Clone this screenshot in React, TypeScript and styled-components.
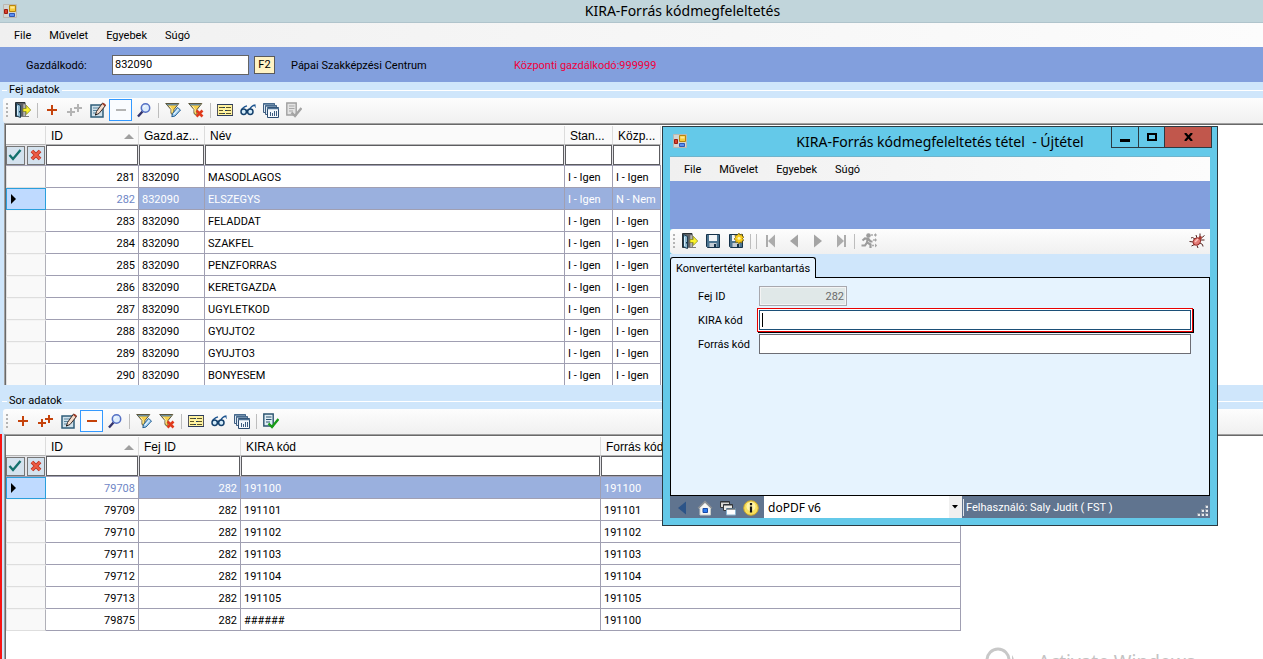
import React from "react";
import styled, { createGlobalStyle, css } from "styled-components";

const ui = `Roboto, "Liberation Sans", Arial, sans-serif`;
const wide = `"Liberation Sans", Arial, sans-serif`;
const segoe = `"Noto Sans", "Open Sans", sans-serif`;

const GlobalStyle = createGlobalStyle`
  *, *::before, *::after { box-sizing: border-box; }
  body { margin: 0; background: #fff; color: #000; font-family: ${ui}; font-size: 11px; line-height: 16px; overflow: hidden; }
  button, input, select { font: inherit; color: inherit; margin: 0; padding: 0; border-radius: 0; }
  button { border: 0; background: none; }
`;

/* ---------- window chrome ---------- */

const Page = styled.div`
  position: relative;
  display: flex;
  flex-direction: column;
  height: 100vh;
  overflow: hidden;
`;

const TitleBar = styled.header`
  display: flex;
  align-items: center;
  height: 23px;
  padding: 0 3px;
  background: #c1d5db;
  border-bottom: 1px solid #b0c4cc;
`;

const WindowTitle = styled.h1`
  flex: 1;
  margin: 0;
  padding-left: 88px;
  text-align: center;
  font: 400 14px/20px ${segoe};
`;

const MenuBar = styled.nav`
  display: flex;
  align-items: center;
  flex: none;
  height: 24px;
  padding: 1px 5px 0;
  background: linear-gradient(90deg, #f0f0f0, #fcfcfc);
`;

const MenuItem = styled.button`
  padding: 0 9px;
`;

const Band = styled.div`
  display: flex;
  align-items: center;
  flex: none;
  height: 35px;
  padding-left: 26px;
  background: #829fdd;
`;

const BandLabel = styled.label`
  width: 86px;
  padding-top: 2px;
`;

const CodeInput = styled.input`
  width: 137px;
  height: 20px;
  padding: 0 2px;
  border: 1px solid #646464;
  background: #fff;
`;

const KeyButton = styled.button`
  width: 21px;
  height: 18px;
  margin: 0 16px 0 5px;
  border: 1px solid #5a5a5a;
  background: #fff3c4;
  line-height: 16px;
`;

const OrgName = styled.span`
  width: 223px;
  padding-top: 2px;
`;

const CentralCode = styled.span`
  padding-top: 2px;
  color: #f0003c;
`;

/* ---------- panels ---------- */

const Panel = styled.section<{ $grow?: boolean }>`
  display: flex;
  flex-direction: column;
  ${(p) => (p.$grow ? "flex: 1; min-height: 0;" : "flex: none; height: 311px;")}
  background: #cfe6fb;
`;

const Legend = styled.h2`
  display: flex;
  align-items: center;
  gap: 2px;
  height: 16px;
  margin: 0;
  padding-left: 2px;
  font: inherit;
  &::before, &::after { content: ""; height: 1px; background: #fff; }
  &::before { width: 5px; }
  &::after { flex: 1; }
`;

const ToolBar = styled.div<{ $inset?: boolean }>`
  display: flex;
  align-items: center;
  flex: none;
  height: 25px;
  margin-left: ${(p) => (p.$inset ? 0 : 3)}px;
  padding: 0 0 1px 3px;
  border-radius: 3px 0 0 3px;
  background: linear-gradient(#fdfdfd, #f0f0f0);
`;

const Grip = styled.span`
  width: 2px;
  height: 15px;
  margin-right: 3px;
  background: repeating-linear-gradient(#b4b4b4 0 2px, transparent 2px 4px);
`;

const ToolButton = styled.button<{ $framed?: boolean; $end?: boolean }>`
  display: flex;
  align-items: center;
  justify-content: center;
  width: 23px;
  height: 22px;
  ${(p) => p.$framed && css`border: 1px solid #3399ff; background: #fafcff;`}
  ${(p) => p.$end && css`margin-left: auto; margin-right: 2px;`}
`;

const Divider = styled.span`
  width: 1px;
  height: 15px;
  margin: 0 2px 0 3px;
  background: #bdbdbd;
`;

const GridBox = styled.div<{ $alert?: boolean }>`
  flex: ${(p) => (p.$alert ? "1" : "none")};
  height: 262px;
  min-height: 0;
  overflow: hidden;
  padding-left: ${(p) => (p.$alert ? 2 : 4)}px;
  ${(p) => p.$alert && css`border-left: 2px solid #f81414;`}
`;

const GridFrame = styled.div`
  height: 100%;
  overflow: hidden;
  border: solid #a0a0a0;
  border-width: 1px 0 0 1px;
  background: #fff;
  box-shadow: inset 1px 1px 0 #696969;
  padding: 2px 0 0 1px;
`;

const Grid = styled.table`
  table-layout: fixed;
  width: 0;
  border-spacing: 0;
  border-collapse: separate;
`;

const HeadCell = styled.th`
  height: 19px;
  padding: 2px 4px 0 5px;
  overflow: hidden;
  white-space: nowrap;
  text-align: left;
  font: 400 12px/16px ${wide};
  background: #fafafa;
  border-right: 1px solid #dcdcdc;
  border-bottom: 1px solid #b4b4b4;
`;

const HeadInner = styled.span`
  display: flex;
  align-items: center;
  justify-content: space-between;
`;

const SortMark = styled.i`
  border: solid transparent;
  border-width: 0 5px 5px;
  border-bottom-color: #a0a0a0;
`;

const FilterCell = styled.td`
  height: 21px;
  padding: 0 1px 0 0;
  border-bottom: 1px solid #a09fb2;
  background: #e4e4e8;
`;

const FilterInput = styled.input`
  display: block;
  width: 100%;
  height: 20px;
  padding: 0 2px;
  border: 1px solid #5c5c60;
  background: #fff;
`;

const FilterTools = styled.div`
  display: flex;
  gap: 2px;
`;

const FilterButton = styled.button`
  display: flex;
  align-items: center;
  justify-content: center;
  flex: 1;
  height: 19px;
  border: 1px solid #767676;
  background: #d4e2ee;
`;

const Row = styled.tr<{ $on?: boolean }>`
  height: 22px;
  color: ${(p) => (p.$on ? "#fff" : "#000")};
  background: ${(p) => (p.$on ? "#9ab0de" : "#fff")};
`;

const RowHead = styled.th<{ $on?: boolean }>`
  height: 22px;
  padding: 0 0 0 4px;
  text-align: left;
  background: #f9f9f9;
  border: 1px solid #dedede;
  border-top-color: #f4f4f4;
  border-right-color: #b0b0b8;
  ${(p) => p.$on && css`background: #bfdaff; border-color: #2a9fdc;`}
`;

const RowMark = styled.i`
  display: block;
  width: 0;
  border: solid transparent;
  border-width: 5px 0 5px 5px;
  border-left-color: #000;
`;

const Cell = styled.td<{ $right?: boolean; $key?: boolean }>`
  height: 22px;
  padding: 2px 3px 0;
  overflow: hidden;
  white-space: nowrap;
  text-align: ${(p) => (p.$right ? "right" : "left")};
  border-right: 1px solid #a09fb2;
  border-bottom: 1px solid #a09fb2;
  ${(p) => p.$key && css`background: #fff; color: #6f87c6;`}
`;

/* ---------- dialog ---------- */

const Dialog = styled.div`
  position: absolute;
  left: 662px;
  top: 126px;
  width: 556px;
  height: 400px;
  display: flex;
  flex-direction: column;
  padding: 0 7px 7px;
  border: 1px solid #2b3a42;
  background: #64c9e9;
`;

const DialogTitleBar = styled.header`
  display: grid;
  grid-template-columns: 1fr auto 1fr;
  height: 30px;
  flex: none;
  border-bottom: 1px solid #70b4cc;
  & > svg { margin: 7px 0 0 3px; }
`;

const DialogTitle = styled.h2`
  margin: 5px 0 0;
  white-space: pre;
  font: 400 14px/20px ${segoe};
`;

const WindowButtons = styled.div`
  display: flex;
  justify-content: flex-end;
  align-items: flex-start;
  margin-right: -2px;
`;

const WindowButton = styled.button<{ $w: number; $close?: boolean }>`
  display: flex;
  align-items: center;
  justify-content: center;
  width: ${(p) => p.$w}px;
  height: 21px;
  border: solid #2b3a42;
  border-width: 0 1px 1px 0;
  background: ${(p) => (p.$close ? "#c1574c" : "transparent")};
  &:first-child { border-left-width: 1px; }
`;

const DialogBand = styled.div`
  flex: none;
  height: 48px;
  background: #829fdd;
`;

const Tabs = styled.div`
  display: flex;
  align-items: flex-end;
  flex: none;
  height: 24px;
  background: #cfe6fb;
  &::after { content: ""; flex: 1; border-bottom: 1px solid #000; }
`;

const Tab = styled.button`
  height: 21px;
  padding: 2px 5px 0;
  border: 1px solid #000;
  border-bottom: 0;
  border-radius: 3px 3px 0 0;
  background: #e6f3fe;
`;

const TabPane = styled.form`
  flex: 1;
  padding: 6px 18px 0 27px;
  border: solid #000;
  border-width: 0 1px 1px;
  background: #e6f3fe;
`;

const Field = styled.div`
  display: flex;
  align-items: center;
  height: 24px;
  & > label { width: 61px; padding-top: 2px; white-space: nowrap; }
`;

const FieldInput = styled.input<{ $focused?: boolean }>`
  flex: 1;
  height: 20px;
  padding: 0 2px;
  border: 1px solid #6d6d74;
  background: #fff;
  ${(p) => p.$focused && css`
    border-color: #1c5078;
    background: linear-gradient(#000, #000) 2px 2px / 1px 14px no-repeat #fff;
    box-shadow: 0 0 0 1px #fff, 0 0 0 2px #e80000, 1px 1px 0 2px #000;
  `}
  &:disabled {
    flex: none;
    width: 88px;
    border-color: #a8a8ae;
    background: #e0e8e8;
    box-shadow: inset 0 0 0 1px #f4f4f4;
    color: #6b6b6b;
    text-align: right;
  }
`;

const StatusBar = styled.footer`
  display: flex;
  align-items: center;
  flex: none;
  height: 22px;
  background: #60748f;
  color: #fff;
`;

const StatusIcon = styled.button`
  display: flex;
  align-items: center;
  justify-content: center;
  width: 23px;
  height: 22px;
  padding-top: 1px;
`;

const PrinterBox = styled.div`
  display: flex;
  width: 198px;
  height: 22px;
  margin-left: 2px;
  background: linear-gradient(#f0f0f0, #f0f0f0) right / 13px 100% no-repeat #fff;
  color: #000;
  align-items: center;
  & > svg { margin: 0 4px 0 -10px; pointer-events: none; }
`;

const PrinterSelect = styled.select`
  appearance: none;
  flex: 1;
  height: 22px;
  padding: 2px 12px 0 4px;
  border: 0;
  background: none;
  font: 400 12px/18px ${segoe};
`;

const StatusText = styled.span`
  margin-left: 1px;
  padding: 1px 0 0 2px;
  border-left: 1px solid #e0e4ea;
`;

const SizeGrip = styled.span`
  margin: 8px 1px 0 auto;
  line-height: 0;
`;

const Watermark = styled.div`
  position: absolute;
  left: 984px;
  bottom: -18px;
  display: flex;
  align-items: center;
  gap: 20px;
  color: #c3c3c3;
  font: 400 19px/30px ${segoe};
  pointer-events: none;
`;

/* ---------- icons ---------- */

type IconProps = { children: React.ReactNode; w?: number; h?: number };
const Icon = ({ children, w = 16, h = 16 }: IconProps) => (
  <svg width={w} height={h} viewBox={`0 0 ${w} ${h}`} fill="none" aria-hidden="true">
    {children}
  </svg>
);

const AppIcon = () => (
  <Icon w={14} h={14}>
    <path d="M.5.5h13v13H.5z" fill="#d2d6d4" stroke="#bcb8b0" />
    <path d="M6.5 1.5h6v6h-6z" fill="#f6cb3c" stroke="#b8860b" />
    <path d="M7.5 2.5h4v2h-4z" fill="#ffe894" />
    <path d="M1.5 5.5h3v4h-3z" fill="#d8402c" stroke="#9c1c10" />
    <path d="M6.5 9.5h5v3h-5z" fill="#5c8ff0" stroke="#2c56b4" />
  </Icon>
);
const ExitIcon = () => (
  <Icon>
    <path d="M.5.5h9.500v14H.5z" fill="#5c6064" stroke="#2a3034" />
    <path d="M8 2h2.500v12.500H8z" fill="#b4b4b0" stroke="#6c6c6c" strokeWidth=".6" />
    <path d="M1.500 1.500l4 2v12l-4-1.500z" fill="#8fbad2" stroke="#1e3c50" />
    <path d="M2.500 4v9" stroke="#d4ecf8" />
    <path d="M4.500 9v1.500" stroke="#1e3c50" />
    <path d="M6 14.500h8" stroke="#7c7c7c" />
    <path d="M8 6.500h3.200V3.200L15.700 8l-4.500 4.500V9.500H8z" fill="#fbf32a" stroke="#8c8a20" strokeWidth=".8" />
  </Icon>
);
const PlusIcon = () => (
  <Icon><path d="M3 8h10M8 3v10" stroke="#c5430c" strokeWidth="2" /></Icon>
);
const DoublePlusIcon = ({ off }: { off?: boolean }) => (
  <Icon>
    <path d="M0 10h8M4 6v8M7 6h8M11 2v8" stroke={off ? "#b4b4b4" : "#c5430c"} strokeWidth="2" />
  </Icon>
);
const MinusIcon = ({ off }: { off?: boolean }) => (
  <Icon><path d="M3 8h10" stroke={off ? "#b4b4b4" : "#c5430c"} strokeWidth="2" /></Icon>
);
const EditIcon = () => (
  <Icon>
    <path d="M1 3h12v12H1z" fill="#cfe0ea" stroke="#2f5d7a" strokeWidth="1.500" />
    <path d="M3 6h6M3 8.500h4M3 11h3" stroke="#5b87a0" />
    <path d="M5.500 13l1-3.500 6-8.500 3 2.500L9 11.500z" fill="#f6dccb" stroke="#332a28" />
    <path d="M12 2l2.800 2.200 1-1.700-2.300-1.800z" fill="#a03c28" />
    <path d="M5 13.500l1.800-.8-1-1z" fill="#000" />
  </Icon>
);
const SearchIcon = () => (
  <Icon>
    <path d="M6.500 9.500L2 14.500" stroke="#34346c" strokeWidth="2.400" />
    <circle cx="9.500" cy="6" r="4.200" fill="#dcecfc" stroke="#5470c4" strokeWidth="1.500" />
    <path d="M7.500 5.500q.5-1.500 2-1.700" stroke="#fff" />
  </Icon>
);
const Funnel = () => (
  <>
    <path d="M.7 1.500h13.100L9 7.500v6.500L6 11.500V7.500z" fill="#f8cf48" stroke="#5c563c" />
    <path d="M1.500 2h11.500l-1 1.500H2.500z" fill="#6c8c9c" />
    <path d="M4.500 4l2.500 3.500v3" stroke="#fff2b4" />
  </>
);
const FilterEditIcon = () => (
  <Icon>
    <Funnel />
    <path d="M6.800 14.700l.7-3.200 5-6 3 2.500-5.500 6z" fill="#a8d4f4" stroke="#205c90" />
    <path d="M9 12l4.500-5.200" stroke="#f4fbff" />
  </Icon>
);
const FilterClearIcon = () => (
  <Icon>
    <Funnel />
    <path d="M8.500 8.500l6 6M14.500 8.500l-6 6" stroke="#e03a1c" strokeWidth="2.600" />
  </Icon>
);
const ListIcon = () => (
  <Icon>
    <path d="M.5 2.500h15v11H.5z" fill="#fff3a0" stroke="#54545c" />
    <path d="M0 2.500h16M0 13.500h16" stroke="#2c3c5c" />
    <path d="M2 5.500h4M2 8.500h4M2 11.500h4M9 5.500h5M9 8.500h5M9 11.500h5" stroke="#5c5428" />
    <path d="M6 5h2v1H6zM8 8h2v1H8zM6 11h2v1H6z" fill="#1c3c64" />
  </Icon>
);
const GlassesIcon = () => (
  <Icon>
    <path d="M1.200 8.500Q2.500 5 7 3.800M9.500 8q1.500-4.500 6-5" stroke="#1c5490" strokeWidth="1.300" />
    <circle cx="3.700" cy="9.700" r="2.700" fill="#d4ecfa" stroke="#14406c" strokeWidth="1.500" />
    <circle cx="10.300" cy="9.700" r="2.700" fill="#d4ecfa" stroke="#14406c" strokeWidth="1.500" />
    <path d="M6 9q1-1.500 2 0" stroke="#14406c" strokeWidth="1.300" />
    <path d="M14.500 3l1 2.500" stroke="#1c5490" />
  </Icon>
);
const WindowsIcon = () => (
  <Icon>
    <path d="M.5 1.500h11v9H.5z" fill="#dce8f2" stroke="#3c5c80" />
    <path d="M2.500 3.500h11v9h-11z" fill="#dce8f2" stroke="#3c5c80" />
    <path d="M4.500 5.500h11v10h-11z" fill="#f4f8fc" stroke="#2c4c70" />
    <path d="M4 6.500h12M.5 2h11M2.500 4h11" stroke="#4c7094" strokeWidth="1.500" />
    <path d="M7.500 10v4M9.500 11v3M11.500 9v5M13.500 9v5" stroke="#3c5c80" />
  </Icon>
);
const ApproveIcon = ({ off }: { off?: boolean }) => (
  <Icon>
    <path d="M.8 1h9.400v12H.8z" fill={off ? "#e4e4e4" : "#e0edf4"} stroke={off ? "#a0a0a0" : "#2c5470"} strokeWidth="1.400" />
    <path d="M3 4h5.500M3 6.500h5.500M3 9h4" stroke={off ? "#a8a8a8" : "#2c5470"} />
    <path d="M5.500 10.500l3.500 3.500 6.500-8" stroke={off ? "#a4a4a4" : "#189c18"} strokeWidth="2.400" />
  </Icon>
);
const CheckIcon = () => (
  <Icon w={14} h={14}>
    <path d="M1.500 7l3.500 4 7.500-9" stroke="#12706c" strokeWidth="2.400" />
  </Icon>
);
const CrossIcon = () => (
  <Icon w={12} h={12}>
    <path d="M2 2l8 8M10 2l-8 8" stroke="#b83020" strokeWidth="3.800" />
    <path d="M2 2l8 8M10 2l-8 8" stroke="#ee5c44" strokeWidth="2" />
  </Icon>
);
const SaveShape = () => (
  <>
    <path d="M1.500 1.500h13v13h-12l-1-1z" fill="#4c7490" stroke="#16324a" />
    <path d="M4 2h8v6H4z" fill="#f4f6f8" />
    <path d="M4.500 10h7v4h-7z" fill="#c4ccd4" />
    <path d="M9 11h2v3H9z" fill="#16324a" />
  </>
);
const SaveIcon = () => <Icon><SaveShape /></Icon>;
const SaveNewIcon = () => (
  <Icon>
    <SaveShape />
    <path d="M11 0l1 2 2-1v2l2 1-1.500 1.500L16 7.500l-2 .5v2l-2-1-1 2-1.500-2-2 .5.500-2L6 6l1.500-1.500L7 2l2 .5z" fill="#f8cc1c" stroke="#7c6410" strokeWidth=".7" />
    <circle cx="11" cy="5.300" r="1.500" fill="#fff8b0" />
  </Icon>
);
const FirstIcon = () => (
  <Icon><path d="M4 2v12" stroke="#acacac" strokeWidth="2" /><path d="M12 1.500v13L5 8z" fill="#acacac" /></Icon>
);
const PrevIcon = ({ c = "#a4a4a4" }: { c?: string }) => (
  <Icon><path d="M12 1.500v13L4 8z" fill={c} /></Icon>
);
const NextIcon = () => <Icon><path d="M5 1.500v13L13 8z" fill="#a4a4a4" /></Icon>;
const LastIcon = () => (
  <Icon><path d="M13 2v12" stroke="#acacac" strokeWidth="2" /><path d="M5 1.500v13L12 8z" fill="#acacac" /></Icon>
);
const RunIcon = () => (
  <Icon>
    <circle cx="7.500" cy="2.500" r="2.300" fill="#9c9c9c" />
    <path d="M7 4.500L6 9.500l3.500 2v3.500M6 9.500l-2 3H.5M1.500 7.500L4 5.500l3.500.5 2 2.500h2" stroke="#9c9c9c" strokeWidth="2.200" />
    <path d="M10 2h5M11 12.500h4.500M12 7h3" stroke="#acacac" strokeDasharray="2 1" strokeWidth="1.500" />
    <path d="M14 0l2 2-2 2zM14 5l2 2-2 2zM14 10.500l2 2-2 2z" fill="#a4a4a4" />
  </Icon>
);
const BugIcon = () => (
  <Icon>
    <path d="M6 6L3.500 4.500 2 5M4.500 9L.5 8.500M5.500 11.500L2.500 13M8 12.500l1 2.500M11 10l2.500 1.500.5 2M11.500 7h4M8 5L7 2M11 4.500L11 .5M13 4.500l2.500-2" stroke="#50201c" />
    <ellipse cx="7.800" cy="8.500" rx="4" ry="3.300" transform="rotate(-40 7.800 8.500)" fill="#e47c78" stroke="#902420" />
    <circle cx="11.300" cy="4.800" r="1.700" fill="#a43830" />
    <path d="M6 9l3-3" stroke="#fcc4bc" strokeWidth="1.500" />
  </Icon>
);
const HomeIcon = () => (
  <Icon>
    <path d="M3 8h10.500v7H3z" fill="#f8f8f4" stroke="#c8ccc8" />
    <path d="M8 2.500L14 8.500H2z" fill="#f8f8f4" />
    <path d="M1.200 8.300L8 1.600l6.800 6.700" stroke="#8c9094" strokeWidth="1.500" />
    <path d="M6 8.500h4.500v4H6z" fill="#2c7cf0" stroke="#1848a4" />
  </Icon>
);
const CascadeIcon = () => (
  <Icon>
    <path d="M.5 1.500h9v6h-9z" fill="#d8d8d4" stroke="#34383c" />
    <path d="M3.500 4.500h9v6h-9z" fill="#ecece8" stroke="#34383c" />
    <path d="M6.500 8.500h9v6.500h-9z" fill="#fff" stroke="#8cb4d0" />
    <path d="M.5 2h9M3.500 5h9M6.500 9h9" stroke="#2c3034" />
  </Icon>
);
const InfoIcon = () => (
  <Icon>
    <circle cx="8" cy="8" r="7.300" fill="#f8e05c" stroke="#c8a430" />
    <circle cx="8" cy="6.500" r="4.500" fill="#fff4a8" />
    <path d="M8 3v2.200M8 6.500v6" stroke="#141414" strokeWidth="2.200" />
  </Icon>
);

/* ---------- shared parts ---------- */

const Menu = () => (
  <MenuBar>
    {["File", "Művelet", "Egyebek", "Súgó"].map((m) => (
      <MenuItem key={m} type="button">{m}</MenuItem>
    ))}
  </MenuBar>
);

const Tool = ({ name, children, framed, end }: { name: string; children: React.ReactNode; framed?: boolean; end?: boolean }) => (
  <ToolButton type="button" aria-label={name} $framed={framed} $end={end}>{children}</ToolButton>
);

const GridTools = ({ detail }: { detail?: boolean }) => (
  <ToolBar>
    <Grip />
    {!detail && (
      <>
        <Tool name="Kilépés"><ExitIcon /></Tool>
        <Divider />
      </>
    )}
    <Tool name="Új"><PlusIcon /></Tool>
    <Tool name="Új tétel"><DoublePlusIcon off={!detail} /></Tool>
    <Tool name="Módosítás"><EditIcon /></Tool>
    <Tool name="Törlés" framed><MinusIcon off={!detail} /></Tool>
    <Tool name="Keresés"><SearchIcon /></Tool>
    <Divider />
    <Tool name="Szűrő"><FilterEditIcon /></Tool>
    <Tool name="Szűrő törlése"><FilterClearIcon /></Tool>
    <Divider />
    <Tool name="Lista"><ListIcon /></Tool>
    <Tool name="Nézet"><GlassesIcon /></Tool>
    <Tool name="Ablakok"><WindowsIcon /></Tool>
    {detail && <Divider />}
    <Tool name="Jóváhagyás"><ApproveIcon off={!detail} /></Tool>
  </ToolBar>
);

type Column = { title: string; width: number; right?: boolean };

const DataGrid = ({ columns, rows, selected }: { columns: Column[]; rows: string[][]; selected: number }) => (
  <GridFrame>
    <Grid>
      <colgroup>
        <col style={{ width: 40 }} />
        {columns.map((c) => <col key={c.title} style={{ width: c.width }} />)}
      </colgroup>
      <thead>
        <tr>
          <HeadCell />
          {columns.map((c, i) => (
            <HeadCell key={c.title} scope="col">
              <HeadInner>{c.title}{i === 0 && <SortMark />}</HeadInner>
            </HeadCell>
          ))}
        </tr>
        <tr>
          <FilterCell>
            <FilterTools>
              <FilterButton type="button" aria-label="Szűrés"><CheckIcon /></FilterButton>
              <FilterButton type="button" aria-label="Mégse"><CrossIcon /></FilterButton>
            </FilterTools>
          </FilterCell>
          {columns.map((c) => (
            <FilterCell key={c.title}><FilterInput aria-label={c.title} /></FilterCell>
          ))}
        </tr>
      </thead>
      <tbody>
        {rows.map((r, ri) => (
          <Row key={r[0]} $on={ri === selected}>
            <RowHead $on={ri === selected} scope="row">{ri === selected && <RowMark />}</RowHead>
            {r.map((v, i) => (
              <Cell key={i} $right={columns[i].right} $key={ri === selected && i === 0}>{v}</Cell>
            ))}
          </Row>
        ))}
      </tbody>
    </Grid>
  </GridFrame>
);

/* ---------- data ---------- */

const headColumns: Column[] = [
  { title: "ID", width: 93, right: true },
  { title: "Gazd.az...", width: 66 },
  { title: "Név", width: 360 },
  { title: "Stan...", width: 48 },
  { title: "Közp...", width: 48 },
];

const headRows = [
  "MASODLAGOS", "ELSZEGYS", "FELADDAT", "SZAKFEL", "PENZFORRAS",
  "KERETGAZDA", "UGYLETKOD", "GYUJTO2", "GYUJTO3", "BONYESEM",
].map((name, i) => [String(281 + i), "832090", name, "I - Igen", i === 1 ? "N - Nem" : "I - Igen"]);

const lineColumns: Column[] = [
  { title: "ID", width: 93, right: true },
  { title: "Fej ID", width: 102, right: true },
  { title: "KIRA kód", width: 360 },
  { title: "Forrás kód", width: 360 },
];

const lineRows = [
  ["79708", "282", "191100", "191100"],
  ["79709", "282", "191101", "191101"],
  ["79710", "282", "191102", "191102"],
  ["79711", "282", "191103", "191103"],
  ["79712", "282", "191104", "191104"],
  ["79713", "282", "191105", "191105"],
  ["79875", "282", "######", "191100"],
];

/* ---------- page ---------- */

const ItemDialog = () => (
  <Dialog role="dialog" aria-labelledby="dialog-title">
    <DialogTitleBar>
      <AppIcon />
      <DialogTitle id="dialog-title">{"KIRA-Forrás kódmegfeleltetés tétel  - Újtétel"}</DialogTitle>
      <WindowButtons>
        <WindowButton type="button" aria-label="Kis méret" $w={28}>
          <Icon w={10} h={12}><path d="M0 9.500h10" stroke="#000" strokeWidth="3" /></Icon>
        </WindowButton>
        <WindowButton type="button" aria-label="Teljes méret" $w={26}>
          <Icon w={10} h={8}><path d="M1 1h8v6H1z" stroke="#000" strokeWidth="2" /></Icon>
        </WindowButton>
        <WindowButton type="button" aria-label="Bezárás" $w={47} $close>
          <Icon w={9} h={8}><path d="M1 0l7 8M8 0L1 8" stroke="#000" strokeWidth="2.200" /></Icon>
        </WindowButton>
      </WindowButtons>
    </DialogTitleBar>
    <Menu />
    <DialogBand />
    <ToolBar $inset>
      <Grip />
      <Tool name="Kilépés"><ExitIcon /></Tool>
      <Tool name="Mentés"><SaveIcon /></Tool>
      <Tool name="Mentés és új"><SaveNewIcon /></Tool>
      <Divider />
      <Divider />
      <Tool name="Első"><FirstIcon /></Tool>
      <Tool name="Előző"><PrevIcon /></Tool>
      <Tool name="Következő"><NextIcon /></Tool>
      <Tool name="Utolsó"><LastIcon /></Tool>
      <Divider />
      <Tool name="Futtatás"><RunIcon /></Tool>
      <Tool name="Hibakeresés" end><BugIcon /></Tool>
    </ToolBar>
    <Tabs role="tablist">
      <Tab type="button" role="tab" aria-selected="true">Konvertertétel karbantartás</Tab>
    </Tabs>
    <TabPane>
      <Field>
        <label htmlFor="fej-id">Fej ID</label>
        <FieldInput id="fej-id" defaultValue="282" disabled />
      </Field>
      <Field>
        <label htmlFor="kira-kod">KIRA kód</label>
        <FieldInput id="kira-kod" $focused />
      </Field>
      <Field>
        <label htmlFor="forras-kod">Forrás kód</label>
        <FieldInput id="forras-kod" />
      </Field>
    </TabPane>
    <StatusBar>
      <StatusIcon type="button" aria-label="Vissza"><PrevIcon c="#2c5488" /></StatusIcon>
      <StatusIcon type="button" aria-label="Kezdőlap"><HomeIcon /></StatusIcon>
      <StatusIcon type="button" aria-label="Ablakok"><CascadeIcon /></StatusIcon>
      <StatusIcon type="button" aria-label="Információ"><InfoIcon /></StatusIcon>
      <PrinterBox>
        <PrinterSelect aria-label="Nyomtató" defaultValue="doPDF v6">
          <option>doPDF v6</option>
        </PrinterSelect>
        <Icon w={6} h={4}><path d="M0 0h6L3 3.500z" fill="#000" /></Icon>
      </PrinterBox>
      <StatusText>Felhasználó: Saly Judit ( FST )</StatusText>
      <SizeGrip>
        <Icon w={12} h={12}>
          <path d="M8 0h3v3H8zM4 4h3v3H4zM8 4h3v3H8zM0 8h3v3H0zM4 8h3v3H4zM8 8h3v3H8z" fill="#8c96a4" />
          <path d="M9 1h2v2H9zM5 5h2v2H5zM9 5h2v2H9zM1 9h2v2H1zM5 9h2v2H5zM9 9h2v2H9z" fill="#e8eaee" />
        </Icon>
      </SizeGrip>
    </StatusBar>
  </Dialog>
);

export default function App() {
  return (
    <>
      <GlobalStyle />
      <Page>
        <TitleBar>
          <AppIcon />
          <WindowTitle>KIRA-Forrás kódmegfeleltetés</WindowTitle>
        </TitleBar>
        <Menu />
        <Band>
          <BandLabel htmlFor="gazdalkodo">Gazdálkodó:</BandLabel>
          <CodeInput id="gazdalkodo" defaultValue="832090" />
          <KeyButton type="button">F2</KeyButton>
          <OrgName>Pápai Szakképzési Centrum</OrgName>
          <CentralCode>Központi gazdálkodó:999999</CentralCode>
        </Band>
        <Panel>
          <Legend>Fej adatok</Legend>
          <GridTools />
          <GridBox><DataGrid columns={headColumns} rows={headRows} selected={1} /></GridBox>
        </Panel>
        <Panel $grow>
          <Legend>Sor adatok</Legend>
          <GridTools detail />
          <GridBox $alert><DataGrid columns={lineColumns} rows={lineRows} selected={0} /></GridBox>
        </Panel>
        <ItemDialog />
        <Watermark aria-hidden="true">
          <Icon w={34} h={30}>
            <path d="M3 13a11 11 0 0 1 22 0a11 11 0 0 1-22 0z" stroke="#c8c8c8" strokeWidth="3" />
            <path d="M28 8q4 6 0 12z" fill="#c8c8c8" />
          </Icon>
          <span>Activate Windows</span>
        </Watermark>
      </Page>
    </>
  );
}
